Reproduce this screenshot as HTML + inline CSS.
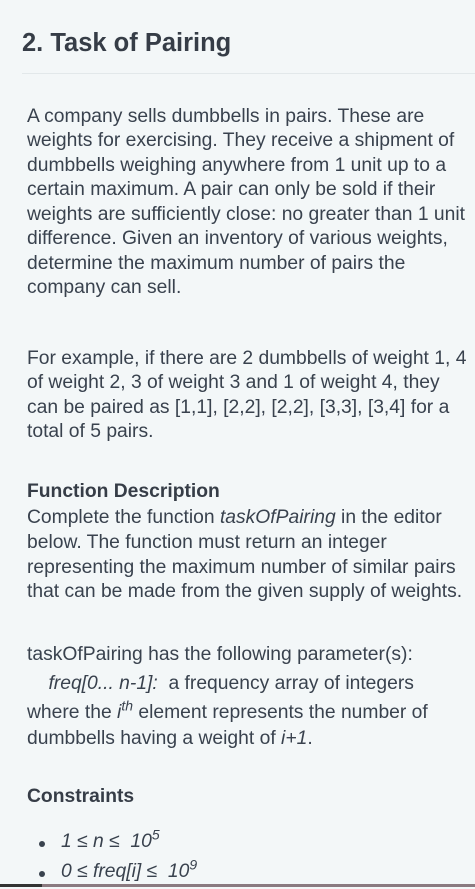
<!DOCTYPE html>
<html><head><meta charset="utf-8"><style>
html,body{margin:0;padding:0}
body{width:475px;height:887px;background:#f3f7f8;position:relative;overflow:hidden;font-family:"Liberation Sans",sans-serif;color:#39424e}
.w{position:absolute;left:0;top:2px;width:475px;height:887px}
.l{position:absolute;left:27px;white-space:nowrap;font-size:19.3px;line-height:24px;height:24px}
.t{position:absolute;left:22px;top:27px;font-size:25.5px;font-weight:bold;color:#363d47;line-height:32px}
.hr{position:absolute;left:22px;right:0;top:73px;height:1px;background:#e2e8ea}
b{font-weight:bold;color:#363d47}
.dot{position:absolute;left:39px;width:6px;height:6px;border-radius:50%;background:#39424e}
.bar{position:absolute;left:0;bottom:0;width:475px;height:3px;background:#8a7a80}
.bar0{position:absolute;left:0;bottom:0;width:42px;height:3px;background:#333}
</style></head><body>
<div class="t">2. Task of Pairing</div>
<div class="hr"></div>
<div class="w">
<div class="l" style="top:103px">A company sells dumbbells in pairs. These are</div>
<div class="l" style="top:127px">weights for exercising. They receive a shipment of</div>
<div class="l" style="top:152px">dumbbells weighing anywhere from 1 unit up to a</div>
<div class="l" style="top:176px">certain maximum. A pair can only be sold if their</div>
<div class="l" style="top:201px">weights are sufficiently close: no greater than 1 unit</div>
<div class="l" style="top:225px">difference. Given an inventory of various weights,</div>
<div class="l" style="top:250px">determine the maximum number of pairs the</div>
<div class="l" style="top:274px">company can sell.</div>
<div class="l" style="top:345px">For example, if there are 2 dumbbells of weight 1, 4</div>
<div class="l" style="top:369px">of weight 2, 3 of weight 3 and 1 of weight 4, they</div>
<div class="l" style="top:394px">can be paired as [1,1], [2,2], [2,2], [3,3], [3,4] for a</div>
<div class="l" style="top:418px">total of 5 pairs.</div>
<div class="l" style="top:478px"><b>Function Description</b></div>
<div class="l" style="top:504px">Complete the function <i>taskOfPairing</i> in the editor</div>
<div class="l" style="top:529px">below. The function must return an integer</div>
<div class="l" style="top:554px">representing the maximum number of similar pairs</div>
<div class="l" style="top:578px">that can be made from the given supply of weights.</div>
<div class="l" style="top:641px">taskOfPairing has the following parameter(s):</div>
<div class="l" style="top:670px">&nbsp;&nbsp;&nbsp;&nbsp;<i>freq[0... n-1]:</i>&nbsp; a frequency array of integers</div>
<div class="l" style="top:699px">where the <i>i<sup style="font-size:14px;line-height:0">th</sup></i> element represents the number of</div>
<div class="l" style="top:725px">dumbbells having a weight of <i>i+1</i>.</div>
<div class="l" style="top:783px"><b>Constraints</b></div>
<div class="dot" style="top:839px"></div>
<div class="l" style="top:828px;left:61px"><i>1 ≤ n ≤&nbsp; 10<sup style="font-size:14px;line-height:0">5</sup></i></div>
<div class="dot" style="top:869px"></div>
<div class="l" style="top:858px;left:61px"><i>0 ≤ freq[i] ≤&nbsp; 10<sup style="font-size:14px;line-height:0">9</sup></i></div>
</div>
<div class="bar"></div><div class="bar0"></div>
</body></html>
